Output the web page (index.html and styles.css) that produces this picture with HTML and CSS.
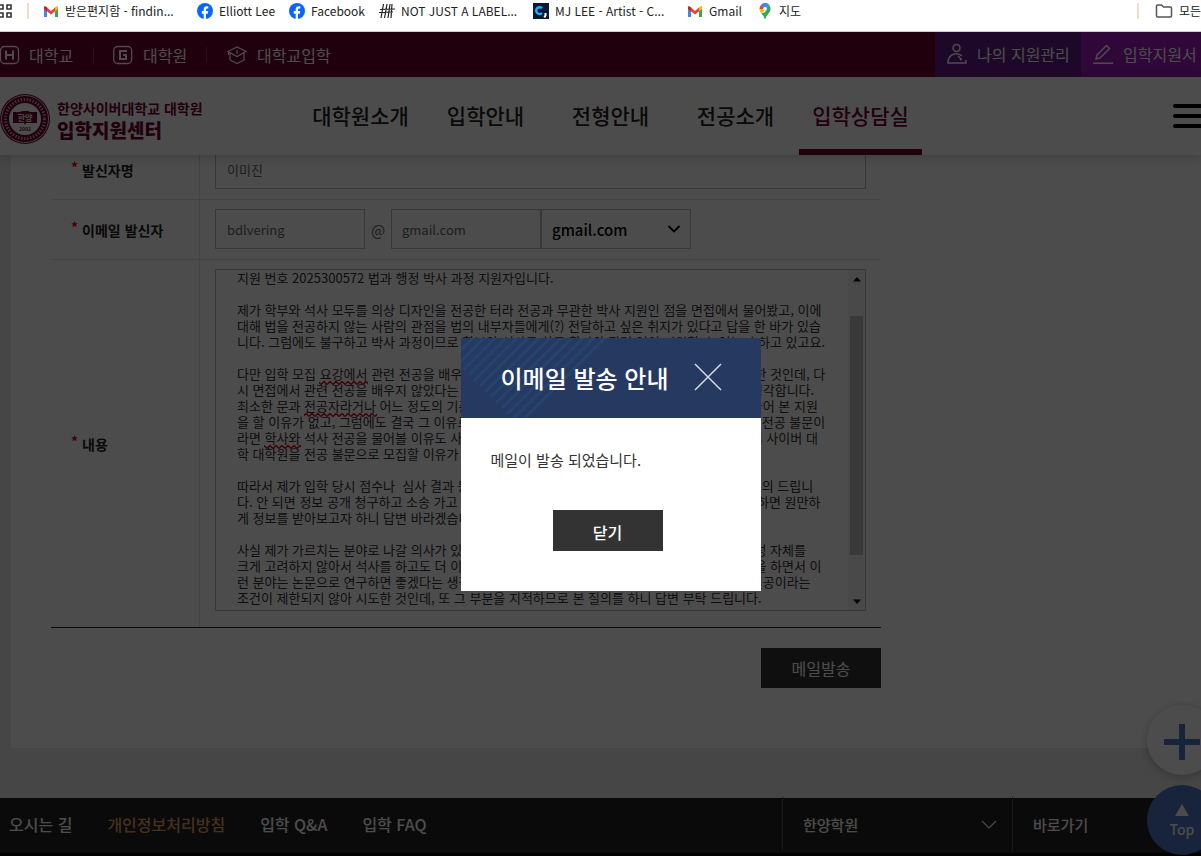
FILE: index.html
```html
<!DOCTYPE html>
<html lang="ko">
<head>
<meta charset="utf-8">
<meta name="viewport" content="width=device-width, initial-scale=1">
<title>한양사이버대학교 대학원 입학지원센터</title>
<link rel="stylesheet" href="styles.css">
</head>
<body>
<nav class="bookmarks" aria-label="북마크">
  <svg class="apps" width="14" height="14" viewBox="0 0 14 14" fill="none" stroke="#333" stroke-width="1.6"><path d="M1 1h4v4H1zM9 1h4v4H9zM1 9h4v4H1zM9 9h4v4H9z"/></svg>
  <span class="mark-line"></span>
  <a href="#" class="mark mark-inbox"><svg width="16" height="16" viewBox="0 0 16 16"><path d="M1 4v10h3V7z" fill="#4285f4"/><path d="M12 7v7h3V4z" fill="#34a853"/><path d="M1 3.500L4 4.500 8 8l4-3.500 3-1V6L8 11.500 1 6z" fill="#ea4335"/><path d="M12 4.500l2-1.400 1 1V6l-3 2.300z" fill="#fbbc04"/><path d="M1 4l1-1 2 1.500v3.800L1 6z" fill="#c5221f"/></svg>받은편지함 - findin...</a>
  <a href="#" class="mark mark-elliott"><svg width="16" height="16" viewBox="0 0 16 16"><circle cx="8" cy="8" r="8" fill="#0866ff"/><path d="M6.700 16v-5.300H4.800V8h1.900V6.700c0-2.500 1.100-3.500 3.300-3.500.5 0 1 .1 1.300.2v2.200h-.9c-1 0-1.400.4-1.400 1.400V8h2.200l-.4 2.700H9V16z" fill="#fff"/></svg>Elliott Lee</a>
  <a href="#" class="mark mark-facebook"><svg width="16" height="16" viewBox="0 0 16 16"><circle cx="8" cy="8" r="8" fill="#0866ff"/><path d="M6.700 16v-5.300H4.800V8h1.900V6.700c0-2.500 1.100-3.500 3.300-3.500.5 0 1 .1 1.300.2v2.200h-.9c-1 0-1.400.4-1.400 1.400V8h2.200l-.4 2.700H9V16z" fill="#fff"/></svg>Facebook</a>
  <a href="#" class="mark mark-label"><svg width="16" height="16" viewBox="0 0 16 16" fill="none" stroke="#222" stroke-width="1.200"><path d="M4.500 1L2 15M8 1L5.500 15M11 1L9 15M13 1l-1 14M1 6.500L16 6M0 9.500L14 9"/></svg>NOT JUST A LABEL...</a>
  <a href="#" class="mark mark-artist"><svg width="16" height="16" viewBox="0 0 16 16"><path d="M0 0h16v16H0z" fill="#0a1a33"/><path d="M9 5.200A3.400 3.400 0 1 0 9 10" fill="none" stroke="#1ab0ff" stroke-width="2.400"/><path d="M12.500 10v2.500l-1.200 2" fill="none" stroke="#fff" stroke-width="2"/></svg>MJ LEE - Artist - C...</a>
  <a href="#" class="mark mark-gmail"><svg width="16" height="16" viewBox="0 0 16 16"><path d="M1 4v10h3V7z" fill="#4285f4"/><path d="M12 7v7h3V4z" fill="#34a853"/><path d="M1 3.500L4 4.500 8 8l4-3.500 3-1V6L8 11.500 1 6z" fill="#ea4335"/><path d="M12 4.500l2-1.400 1 1V6l-3 2.300z" fill="#fbbc04"/><path d="M1 4l1-1 2 1.500v3.800L1 6z" fill="#c5221f"/></svg>Gmail</a>
  <a href="#" class="mark"><svg width="16" height="16" viewBox="0 0 16 16"><path d="M2.500 6A5.500 5.500 0 0 1 8 .3V6z" fill="#ea4335"/><path d="M4 2a5.500 5.500 0 0 1 8.500 0L8 6z" fill="#4285f4"/><path d="M12 2c1.500 1.500 2 4 1 6.300L9.500 13 8 6z" fill="#34a853"/><path d="M2.500 6c0 2 1 3.200 2 4.600L9 6z" fill="#fbbc04"/><path d="M13 7.500c-1 2.500-3.500 4-4.300 8.200H7.400C7 13 5.700 12 4.400 10.400z" fill="#34a853"/><circle cx="8" cy="5.800" r="1.900" fill="#fff"/></svg>지도</a>
  <span class="mark-line mark-line-end"></span>
  <a href="#" class="mark mark-all"><svg width="18" height="16" viewBox="0 0 18 16" fill="none" stroke="#555" stroke-width="1.500"><path d="M1.500 3q0-1 1-1h4l2 2h7q1 0 1 1v8q0 1-1 1h-13q-1 0-1-1z"/></svg>모든 북마크</a>
</nav>

<div class="site">
  <div class="topbar">
    <a href="#" class="top-link top-first"><svg width="20" height="20" viewBox="0 0 20 20" fill="none" stroke="#fff"><rect x=".5" y="1.500" width="18" height="17" rx="4" stroke-width="1.300"/><path d="M6 5.500v9M13 5.500v9M6 10h7" stroke-width="2"/></svg>대학교</a>
    <a href="#" class="top-link top-middle"><svg width="20" height="20" viewBox="0 0 20 20" fill="none" stroke="#fff"><rect x=".7" y="1.500" width="18" height="17" rx="4" stroke-width="1.300"/><path d="M14 6H7v8h6v-4h-3" stroke-width="2"/></svg>대학원</a>
    <a href="#" class="top-link top-last"><svg width="20" height="20" viewBox="0 0 20 20" fill="none" stroke="#fff" stroke-width="1.200"><path d="M1 6.500L10 2l9 4.500-9 5zM3 8v7l7 3.500 7-3.500V8M10 5v4M1.500 7v3"/></svg>대학교입학</a>
    <a href="#" class="top-block top-manage"><svg width="22" height="22" viewBox="0 0 22 22" fill="none" stroke="#fff" stroke-width="1.500"><circle cx="10.500" cy="5" r="3.500"/><path d="M16 13c-4-4-14-3-14 7h18v-3M12 13l3 3M14 17l2-1"/></svg>나의 지원관리</a>
    <a href="#" class="top-block top-apply"><svg width="22" height="22" viewBox="0 0 22 22" fill="none" stroke="#fff" stroke-width="1.500"><path d="M4 16l1-4L14.500 2.500l3 3L8 15zM1 20.300h20"/></svg>입학지원서 작성</a>
  </div>

  <header class="header">
    <a href="#" class="logo">
      <svg class="seal" width="50" height="52" viewBox="0 0 50 52"><circle cx="25" cy="26" r="25" fill="#71002f"/><circle cx="25" cy="26" r="23.500" fill="none" stroke="#fff" stroke-width=".8"/><circle cx="25" cy="26" r="16" fill="#fff"/><circle cx="25" cy="26" r="19.500" fill="none" stroke="#d7b6c3" stroke-width="3" stroke-dasharray="1.300 1.700"/><path d="M13 19h7l2-1h6l2 1h7v11H26l-1 2-1-2H13z" fill="#71002f"/><text x="25" y="28" class="seal-name">한양</text><text x="25" y="38" class="seal-year">2002</text></svg>
      <span class="logo-text"><span>한양사이버대학교 대학원</span><strong>입학지원센터</strong></span>
    </a>
    <nav class="menu">
      <a href="#">대학원소개</a><a href="#">입학안내</a><a href="#">전형안내</a><a href="#">전공소개</a><a href="#" class="current">입학상담실</a>
    </nav>
    <button class="burger" type="button" aria-label="전체 메뉴"><i></i><i></i><i></i></button>
  </header>

  <main class="content">
    <form class="card">
      <table class="fields">
        <tr>
          <th><label for="sender">발신자명</label></th>
          <td><input id="sender" class="box wide" type="text" value="이미진"></td>
        </tr>
        <tr>
          <th><label for="mail-id">이메일 발신자</label></th>
          <td>
            <div class="mail">
              <input id="mail-id" class="box" type="text" value="bdlvering">
              <span class="at">@</span>
              <input class="box" type="text" value="gmail.com" aria-label="이메일 도메인">
              <span class="pick"><select class="box" aria-label="도메인 선택"><option>gmail.com</option></select><svg width="14" height="8" viewBox="0 0 14 8" fill="none" stroke="#000" stroke-width="1.800"><path d="M1.500 1l5.500 5.500L12.500 1"/></svg></span>
            </div>
          </td>
        </tr>
        <tr>
          <th><label for="message">내용</label></th>
          <td>
            <div class="message">
              <textarea id="message" wrap="off" spellcheck="false">지원 번호 2025300572 법과 행정 박사 과정 지원자입니다.

제가 학부와 석사 모두를 의상 디자인을 전공한 터라 전공과 무관한 박사 지원인 점을 면접에서 물어봤고, 이에
대해 법을 전공하지 않는 사람의 관점을 법의 내부자들에게(?) 전달하고 싶은 취지가 있다고 답을 한 바가 있습
니다. 그럼에도 불구하고 박사 과정이므로 학부와 석사를 하고 학과와 관련 없이 지원할 수 있는지 하고 있고요.

다만 입학 모집 요강에서 관련 전공을 배우지 않아도 지원할 수 있다고 되어있어서 그 부분을 지원한 것인데, 다
시 면접에서 관련 전공을 배우지 않았다는 점을 지적하는 것은 요강과 다른부분이 있다고 문제로 생각합니다.
최소한 문과 전공자라거나 어느 정도의 기준이 있다면 모르겠지만 그런 내용이 없다면 굳이 품이 들어 본 지원
을 할 이유가 없고, 그럼에도 결국 그 이유로 불합격이 된다면 모집 요강의 기준과 맞지않습니다 또 전공 불문이
라면 학사와 석사 전공을 물어볼 이유도 사실 없다고 생각하며 그런 기준이 있다면 처음부터 한양의 사이버 대
학 대학원을 전공 불문으로 모집할 이유가 없다고 생각합니다.

따라서 제가 입학 당시 점수나  심사 결과 등 평가에 관한 자료를 공개하여 주실수 있는지 이렇게 문의 드립니
다. 안 되면 정보 공개 청구하고 소송 가고 싶지만 서로 시간이 걸리는 일이 될 것 같아서 답변 가능하면 원만하
게 정보를 받아보고자 하니 답변 바라겠습니다.

사실 제가 가르치는 분야로 나갈 의사가 있는 것이 아니라 연구를 하고 싶은 것이라서 전공의 연관성 자체를
크게 고려하지 않아서 석사를 하고도 더 이어서 다른 분야의 공부를 하고 싶다는 생각이 들었고 일을 하면서 이
런 분야는 논문으로 연구하면 좋겠다는 생각이 들어서 지원을 하게 되었던 것이라서 법과 행정의 전공이라는
조건이 제한되지 않아 시도한 것인데, 또 그 부분을 지적하므로 본 질의를 하니 답변 부탁 드립니다.</textarea>
              <svg class="squiggles" width="160" height="80" viewBox="0 0 160 80"><defs><pattern id="wave" width="6" height="4" patternUnits="userSpaceOnUse"><path d="M0 3.500l3-3 3 3" fill="none" stroke="#f00020" stroke-width="1.500"/></pattern></defs><path d="M82 0h49v4H82zM67 32h73v4H67zM27 64h37v4H27z" fill="url(#wave)"/></svg>
              <div class="scroll"><svg width="8" height="5" viewBox="0 0 8 5"><path d="M4 0l4 4.500H0z"/></svg><span></span><svg width="8" height="5" viewBox="0 0 8 5"><path d="M4 5L0 .5h8z"/></svg></div>
            </div>
          </td>
        </tr>
      </table>
      <div class="actions"><button type="submit" class="send">메일발송</button></div>
    </form>
  </main>

  <footer class="footer">
    <a href="#" class="foot-link">오시는 길</a>
    <a href="#" class="foot-link foot-privacy">개인정보처리방침</a>
    <a href="#" class="foot-link">입학 Q&amp;A</a>
    <a href="#" class="foot-link">입학 FAQ</a>
    <button type="button" class="foot-menu foot-family">한양학원<svg width="16" height="9" viewBox="0 0 16 9" fill="none" stroke="#fff" stroke-width="1.200"><path d="M1 1l7 7 7-7"/></svg></button>
    <button type="button" class="foot-menu foot-quick">바로가기</button>
  </footer>

  <div class="floats">
    <button type="button" class="plus" aria-label="열기"><svg width="36" height="36" viewBox="0 0 36 36"><path d="M15 0h6v15h15v6H21v15h-6V21H0v-6h15z" fill="#4d78c5"/></svg></button>
    <a href="#" class="to-top"><svg width="14" height="12" viewBox="0 0 14 12"><path d="M7 0l7 12H0z" fill="#fff"/></svg>Top</a>
  </div>

  <div class="dim"></div>

  <section class="dialog" role="dialog" aria-labelledby="dialog-title">
    <div class="dialog-head">
      <svg class="stripes" width="150" height="80" viewBox="0 0 150 80" fill="none" stroke="#25446d" stroke-width="3"><path d="M14-2L-2 14M25-2L-2 25M36-2L2 32M47-2L8 37M58-2L13 43M69-2L19 48M80-2L24 54M91-2L30 59M102-2L35 65M113-2L41 70M124-2L46 76M135-2L52 81M146-2L62 82"/></svg>
      <h2 id="dialog-title">이메일 발송 안내</h2>
      <button type="button" class="close" aria-label="창 닫기"><svg width="28" height="28" viewBox="0 0 28 28" fill="none" stroke="#d5dae4" stroke-width="1.500"><path d="M1 1l26 26M27 1L1 27"/></svg></button>
    </div>
    <div class="dialog-body">
      <p>메일이 발송 되었습니다.</p>
      <button type="button" class="confirm">닫기</button>
    </div>
  </section>
</div>
</body>
</html>
```

FILE: styles.css
```css
* { box-sizing: border-box; }
body {
  margin: 0;
  overflow: hidden;
  background: #fff;
  color: #222;
  font-family: "Noto Sans CJK KR", sans-serif;
  font-size: 16px;
}
a { color: inherit; text-decoration: none; }
button, input, select, textarea { font-family: inherit; }
button { border: 0; padding: 0; background: none; color: inherit; }
svg { display: block; flex: none; }

/* bookmark bar */
.bookmarks {
  display: flex;
  align-items: flex-start;
  height: 32px;
  padding-top: 3px;
  border-bottom: 1px solid #ccc;
  overflow: hidden;
  font-size: 12px;
  line-height: 15px;
  white-space: nowrap;
}
.apps { margin: 1px 0 0 -2px; }
.mark-line { width: 2px; height: 16px; margin-left: 15px; background: #fdd9c5; flex: none; }
.mark { display: flex; gap: 6px; flex: none; }
.mark-inbox { width: 154px; margin-left: 14px; }
.mark-elliott { width: 92px; }
.mark-facebook { width: 90px; }
.mark-label { width: 154px; }
.mark-artist { width: 154px; }
.mark-gmail { width: 70px; }
.mark-line-end { margin-left: auto; }
.mark-all { width: 46px; margin-left: 16px; }

.site { position: relative; background: #eaeaea; overflow: hidden; }

/* top bar */
.topbar {
  display: flex;
  align-items: center;
  height: 45px;
  background: #71002f;
  color: #fff;
  white-space: nowrap;
  overflow: hidden;
}
.top-link { display: flex; align-items: center; gap: 10px; flex: none; }
.top-link + .top-link { border-left: 1px solid #8d3359; height: 16px; }
.top-first { width: 93px; gap: 9px; }
.top-middle { width: 113px; padding-left: 19px; }
.top-last { padding-left: 20px; }
.top-block { display: flex; align-items: center; gap: 9px; height: 45px; padding: 0 0 2px 11px; flex: none; }
.top-manage { width: 146px; margin-left: auto; background: #671b89; }
.top-apply { width: 120px; background: #9d1bbe; overflow: hidden; }

/* header */
.header {
  position: relative;
  z-index: 1;
  display: flex;
  height: 78px;
  background: #fff;
  box-shadow: 0 2px 12px rgba(0, 0, 0, .2);
}
.logo { display: flex; align-items: center; gap: 7px; width: 298px; padding-top: 6px; color: #71002f; flex: none; }
.logo-text { display: flex; flex-direction: column; font-size: 14px; font-weight: 700; line-height: 21px; }
.logo-text strong { font-size: 19px; }
.seal-name { fill: #fff; font-size: 8px; font-weight: 700; text-anchor: middle; }
.seal-year { fill: #71002f; font-size: 5px; font-weight: 700; text-anchor: middle; }
.menu { display: grid; grid-template-columns: repeat(5, 125px); font-size: 21px; font-weight: 500; line-height: 76px; text-align: center; }
.menu a { height: 78px; margin: 0 1px; }
.menu .current { color: #71002f; border-bottom: 6px solid #71002f; }
.burger { display: flex; flex-direction: column; gap: 6px; width: 28px; margin: 27px 0 0 auto; }
.burger i { width: 36px; height: 4px; border-radius: 2px; background: #000; }

/* form */
.content { padding: 0 0 50px 11px; margin-top: -15px; }
.card { background: #fff; padding: 0 0 60px 40px; }
.fields { width: 100%; max-width: 830px; border-collapse: separate; border-spacing: 0; border-bottom: 1px solid #222; }
.fields th {
  width: 149px;
  padding: 0 0 2px 20px;
  border-right: 1px solid #ddd;
  text-align: left;
  font-size: 14px;
  font-weight: 700;
  color: #222;
}
.fields th::before { content: "*"; margin-right: 4px; color: #f00000; vertical-align: 3px; }
.fields td { padding: 9px 15px 10px; }
.fields tr:not(:last-child) > * { border-bottom: 1px solid #ddd; }
.fields tr:last-child td { padding-bottom: 16px; }
.box {
  display: block;
  width: 150px;
  height: 40px;
  padding: 0 10px 0 11px;
  border: 1px solid #bbb;
  border-radius: 0;
  background: #fff;
  color: #666;
  font-size: 13px;
}
.wide { width: 100%; }
.mail { display: flex; align-items: center; }
.mail .box + .box { border-left: 0; }
.at { width: 26px; color: #666; font-size: 15px; text-align: center; }
.at + .box { padding-left: 10px; }
.pick { position: relative; }
.pick .box { appearance: none; padding-left: 10px; border-left-width: 1px; color: #000; font-size: 15px; font-weight: 500; }
.pick svg { position: absolute; right: 10px; top: 16px; pointer-events: none; }
.message { position: relative; height: 342px; border: 1px solid #bbb; }
.message textarea {
  display: block;
  width: 100%;
  height: 340px;
  padding: 0 20px 0 21px;
  border: 0;
  background: #fff;
  color: #333;
  font-size: 13px;
  line-height: 16px;
  resize: none;
  overflow: hidden;
}
.squiggles { position: absolute; left: 21px; top: 111px; }
.scroll {
  position: absolute;
  right: 0;
  top: 0;
  bottom: 0;
  display: flex;
  flex-direction: column;
  align-items: center;
  width: 17px;
  padding: 7px 0 6px;
  background: #f4f4f4;
}
.scroll span { width: 13px; height: 239px; margin: 34px 0 auto; background: #c0c0c0; }
.actions { display: flex; justify-content: flex-end; max-width: 830px; padding-top: 20px; }
.send { width: 120px; height: 40px; background: #333; color: #fff; font-size: 16px; }

/* footer */
.footer { display: flex; align-items: center; height: 58px; padding: 0 0 3px 9px; border-bottom: 3px solid #000; background: #222; color: #fff; white-space: nowrap; font-weight: 500; }
.foot-link { margin-right: 35px; }
.foot-privacy { color: #e6a45c; }
.foot-menu { display: flex; align-items: center; height: 54px; padding: 0 15px 0 20px; border-left: 1px solid #555; font-size: 15px; font-weight: 500; }
.foot-family { justify-content: space-between; width: 230px; margin-left: auto; }
.foot-quick { width: 189px; }

/* floating buttons */
.floats { position: absolute; right: -16px; bottom: 1px; display: grid; gap: 10px; }
.plus, .to-top { display: flex; flex-direction: column; align-items: center; justify-content: center; width: 70px; height: 70px; border-radius: 50%; }
.plus { padding-top: 4px; background: #fff; box-shadow: 0 2px 10px rgba(0, 0, 0, .25); }
.to-top { padding-top: 2px; gap: 4px; background: #4d78c5; color: #fff; font-size: 14px; font-weight: 500; line-height: 18px; }

/* dialog */
.dim { position: absolute; inset: 0; z-index: 2; background: rgba(0, 0, 0, .7); }
.dialog { position: absolute; z-index: 3; top: 306px; left: calc(50% - 140px); width: 300px; background: #fff; }
.dialog-head { position: relative; display: flex; align-items: center; justify-content: space-between; height: 80px; padding: 0 39px 2px 40px; background: #253961; color: #fff; }
.stripes { position: absolute; left: 0; top: 0; }
.dialog-head h2 { position: relative; margin: 0; font-size: 24px; font-weight: 500; white-space: nowrap; }
.dialog-body { padding: 30px 36px 40px 30px; }
.dialog-body p { margin: 0 0 38px; font-size: 15px; line-height: 24px; color: #333; }
.confirm { display: block; width: 110px; height: 41px; margin: 0 auto; padding-top: 3px; background: #333; color: #fff; font-size: 16px; font-weight: 500; }
```
